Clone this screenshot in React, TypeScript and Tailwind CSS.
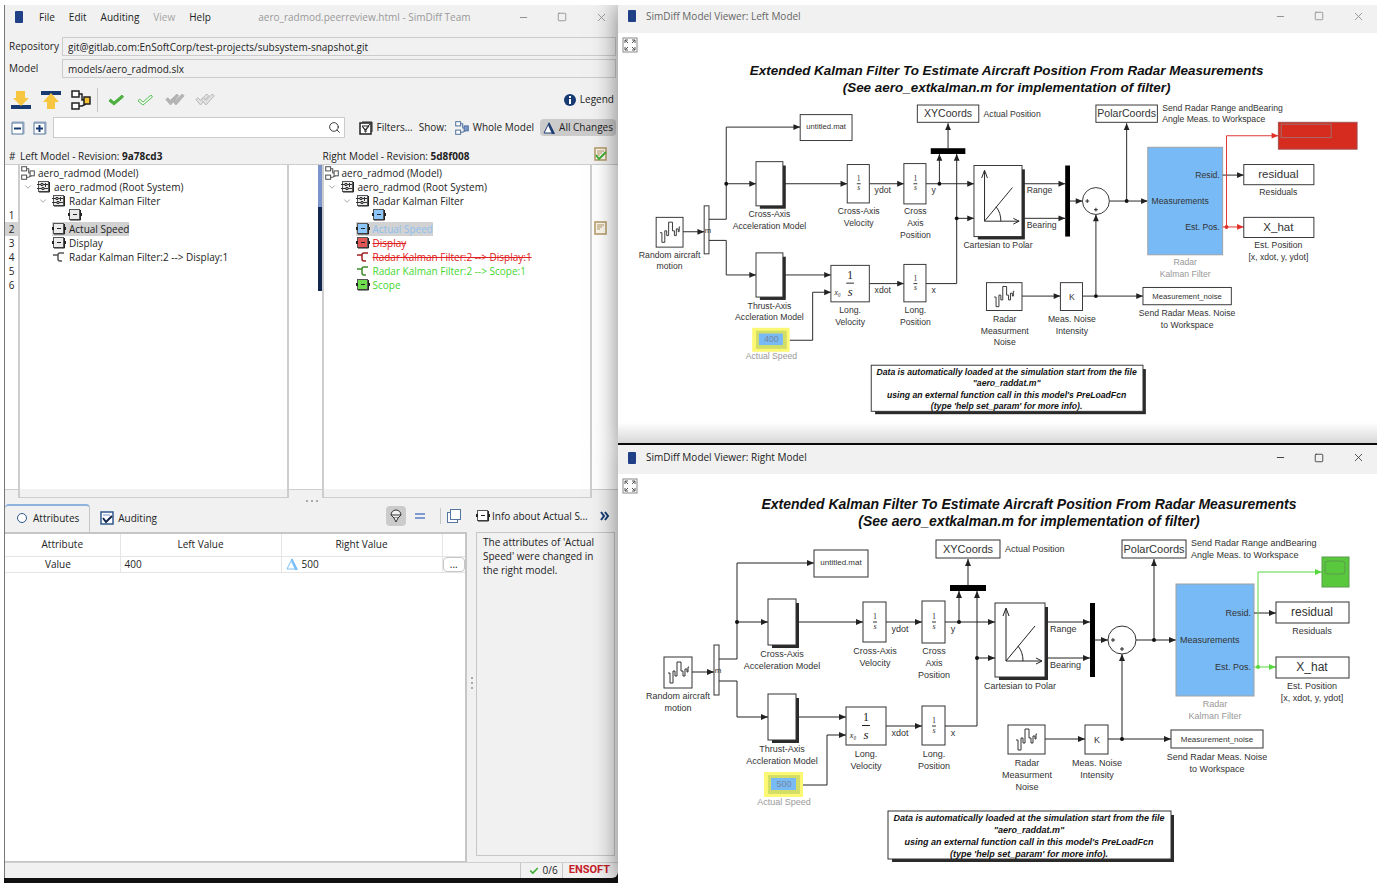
import React from 'react';
import { Check, ChevronDown, Minus, Search, Square, X } from 'lucide-react';
import clsx from 'clsx';

type Point = [number, number];
type Tone = 'plain' | 'changed' | 'removed' | 'added';

const toneFill: Record<Tone, string> = {
  plain: '#ebebeb',
  changed: '#8cc6fa',
  removed: '#e25555',
  added: '#6fdc4e',
};

const toneText: Record<Tone, string> = {
  plain: 'text-[#222]',
  changed: 'text-[#8cc0f0]',
  removed: 'text-[#e02020] line-through',
  added: 'text-[#44d62c]',
};

/* ---------- icons ---------- */

const AppIcon = () => <span className="block h-3 w-2 rounded-[1px] bg-[#1f3f86]" />;

const TreeIcon = ({ accent = '#fff', stroke = '#333', size = 14 }: { accent?: string; stroke?: string; size?: number }) => (
  <svg width={size} height={size} viewBox="0 0 20 20" fill="none" stroke={stroke} strokeWidth="1.5" aria-hidden="true">
    <path d="M8 4h3v6h3M8 16h3l4-2" />
    <rect x="1" y="1" width="7" height="6" fill="#fff" />
    <rect x="1" y="13" width="7" height="6" fill="#fff" />
    <rect x="13" y="7" width="6" height="7" fill={accent} />
  </svg>
);

const BlockIcon = ({ fill = '#ebebeb' }: { fill?: string }) => (
  <svg width="14" height="12" viewBox="0 0 14 12" aria-hidden="true">
    <rect x="1.5" y="0.5" width="10" height="10" fill={fill} stroke="#555" />
    <path d="M2 11h10.500V1" fill="none" stroke="#222" />
    <path d="M0 4h2v3H0zM12 4h2v3h-2z" fill="#222" />
    <path d="M5 5.500h4" stroke="#222" />
  </svg>
);

const SystemIcon = () => (
  <svg width="14" height="12" viewBox="0 0 14 12" aria-hidden="true">
    <rect x="1.5" y="0.5" width="10" height="10" fill="#ebebeb" stroke="#555" />
    <path d="M2 11h10.500V1" fill="none" stroke="#222" />
    <path d="M0 3.500h4M4 2.500h2v2H4zM6 3.500h5M8.500 2v4M0 7.500h5M5 6.500h2v2H5zM7 7.500h4" fill="none" stroke="#333" />
  </svg>
);

const LineIcon = ({ tone = 'plain' }: { tone?: Tone }) => {
  const color = { plain: '#555', changed: '#357', removed: '#a02020', added: '#3c8c2c' }[tone];
  return (
    <svg width="14" height="12" viewBox="0 0 14 12" fill="none" stroke={color} strokeWidth="1.5" aria-hidden="true">
      <path d="M1 4h5M12 2H8Q6 2 6 4v4q0 2 2 2h2" />
    </svg>
  );
};

const NoteIcon = ({ checked }: { checked?: boolean }) => (
  <svg width="13" height="15" viewBox="0 0 13 15" fill="none" aria-hidden="true">
    <rect x="1" y="1" width="11" height="12" fill="#fdf8ee" stroke="#b39866" strokeWidth="1.500" />
    <path d="M3 4h7M3 6h5M3 8h3" stroke="#b39866" />
    {checked && <path d="M2 8l3 4 7-7" stroke="#3fae35" strokeWidth="2" />}
  </svg>
);

const DoubleCheck = ({ outline }: { outline?: boolean }) => (
  <svg width="20" height="13" viewBox="0 0 22 14" fill={outline ? '#e4e4e4' : '#b4b4b4'} stroke="#b0b0b0" aria-hidden="true">
    <path d="M1 7l2-2 3 3 7-7 2 2-9 10z" />
    <path d="M7 7l2-2 3 3 7-7 2 2-9 10z" />
  </svg>
);

const SingleCheck = ({ outline }: { outline?: boolean }) => (
  <svg width="17" height="14" viewBox="0 0 17 14" fill={outline ? '#eefaee' : '#4caf3f'} stroke={outline ? '#5cc05c' : '#4caf3f'} aria-hidden="true">
    <path d="M1 8l1.500-2L6 9l8-7 1.500 2L6 12z" />
  </svg>
);

const DownloadIcon = () => (
  <svg width="20" height="20" viewBox="0 0 20 20" aria-hidden="true">
    <path d="M0 15h20v4H0z" fill="#173a73" />
    <path d="M5 1h9v7h4l-8 8-8-8h3z" fill="#f7c640" />
  </svg>
);

const UploadIcon = () => (
  <svg width="20" height="20" viewBox="0 0 20 20" aria-hidden="true">
    <path d="M0 1h20v4H0z" fill="#173a73" />
    <path d="M10 3l8 9h-4v7H6v-7H2z" fill="#f7c640" />
  </svg>
);

const ExpandBox = ({ plus }: { plus?: boolean }) => (
  <svg width="14" height="14" viewBox="0 0 14 14" fill="none" stroke="#54769f" aria-hidden="true">
    <path d="M1 1h12v12" stroke="#8fa5c2" />
    <rect x="1" y="2" width="11" height="11" fill="#fff" />
    <path d={plus ? 'M3 7.500h7M6.500 4v7' : 'M3 7.500h7'} stroke="#173a73" strokeWidth="2" />
  </svg>
);

const Triangle = ({ color = '#1f3f73' }: { color?: string }) => (
  <svg width="12" height="12" viewBox="0 0 12 12" aria-hidden="true">
    <path d="M6 1L1 11h10z" fill="#fff" stroke={color} />
    <path d="M6 0l6 12H9L5 3z" fill={color} />
  </svg>
);

const FilterIcon = () => (
  <svg width="14" height="14" viewBox="0 0 14 14" fill="none" stroke="#222" aria-hidden="true">
    <path d="M3 1h10v10" />
    <rect x="1" y="2" width="11" height="11" fill="#fff" strokeWidth="1.500" />
    <path d="M3 5h7L7 9v2H6V9zM4 6l2 3 5-6" />
  </svg>
);

const SearchIcon = () => <Search size={13} strokeWidth={1.75} className="text-[#333]" />;

/* ---------- shared window parts ---------- */

const WindowButtons = ({ muted }: { muted?: boolean }) => (
  <div className={clsx('flex items-center gap-7', muted ? 'text-[#8a8a8a]' : 'text-[#333]')}>
    <button aria-label="Minimize"><Minus size={11} strokeWidth={2} /></button>
    <button aria-label="Maximize"><Square size={10} strokeWidth={2} /></button>
    <button aria-label="Close"><X size={13} strokeWidth={1.5} /></button>
  </div>
);

/* ---------- model tree ---------- */

interface Node {
  label: string;
  depth: number;
  kind: 'model' | 'system' | 'block' | 'line';
  tone?: Tone;
  selected?: boolean;
}

const baseNodes: Node[] = [
  { label: 'aero_radmod (Model)', depth: 0, kind: 'model' },
  { label: 'aero_radmod (Root System)', depth: 1, kind: 'system' },
  { label: 'Radar Kalman Filter', depth: 2, kind: 'system' },
];

const leftNodes: Node[] = [
  ...baseNodes,
  { label: '', depth: 3, kind: 'block' },
  { label: 'Actual Speed', depth: 2, kind: 'block', selected: true },
  { label: 'Display', depth: 2, kind: 'block' },
  { label: 'Radar Kalman Filter:2 --> Display:1', depth: 2, kind: 'line' },
];

const rightNodes: Node[] = [
  ...baseNodes,
  { label: '', depth: 3, kind: 'block', tone: 'changed' },
  { label: 'Actual Speed', depth: 2, kind: 'block', tone: 'changed', selected: true },
  { label: 'Display', depth: 2, kind: 'block', tone: 'removed' },
  { label: 'Radar Kalman Filter:2 --> Display:1', depth: 2, kind: 'line', tone: 'removed' },
  { label: 'Radar Kalman Filter:2 --> Scope:1', depth: 2, kind: 'line', tone: 'added' },
  { label: 'Scope', depth: 2, kind: 'block', tone: 'added' },
];

const indent = ['pl-px', 'pl-[17px]', 'pl-8', 'pl-12'];

const TreeRow = ({ node }: { node: Node }) => {
  const tone = node.tone ?? 'plain';
  return (
    <li className={clsx('flex h-3.5 items-center', indent[node.depth])}>
      {node.kind === 'system' && <ChevronDown size={10} strokeWidth={2} className="-ml-3.5 mr-1 shrink-0 text-[#999]" />}
      <span className={clsx('flex h-3.5 items-center gap-[3px] whitespace-nowrap', node.selected && 'bg-[#d2d2d2]')}>
        {node.kind === 'model' && <TreeIcon size={14} stroke="#555" />}
        {node.kind === 'system' && <SystemIcon />}
        {node.kind === 'block' && <BlockIcon fill={toneFill[tone]} />}
        {node.kind === 'line' && <LineIcon tone={tone} />}
        <span className={toneText[tone]}>{node.label}</span>
      </span>
    </li>
  );
};

const ModelTree = ({ nodes }: { nodes: Node[] }) => (
  <div className="flex min-w-0 flex-1 flex-col overflow-hidden border-x-2 border-t border-b border-[#cdcdcd] bg-white">
    <ul className="flex-1 pt-px">
      {nodes.map((node, i) => <TreeRow key={i} node={node} />)}
    </ul>
    <div className="h-2 bg-[#f1f1f1]" />
  </div>
);

const CompareTrees = () => (
  <section className="flex min-h-0 flex-1 flex-col">
    <div className="flex h-4 items-center">
      <span className="w-[13px] pl-1">#</span>
      <span className="flex-1 pl-0.5">Left Model - Revision: <b>9a78cd3</b></span>
      <span className="w-[33px]" />
      <span className="flex-1">Right Model - Revision: <b>5d8f008</b></span>
      <span className="-mt-1 w-[26px] pl-0.5"><NoteIcon checked /></span>
    </div>
    <div className="flex min-h-0 flex-1">
      <ol className="mb-2 w-[13px] border-y border-[#cdcdcd] bg-white pt-[43px] text-center">
        {[1, 2, 3, 4, 5, 6].map((n) => (
          <li key={n} className={clsx('h-3.5 leading-3.5', n === 2 && 'bg-[#d2d2d2]')}>{n}</li>
        ))}
      </ol>
      <ModelTree nodes={leftNodes} />
      <div className="mb-2 flex w-[33px] flex-col items-end border-y border-[#cdcdcd] bg-white">
        <span className="h-[42px] w-1 bg-[#7b94cc]" />
        <span className="h-[84px] w-1 bg-[#12264f]" />
      </div>
      <ModelTree nodes={rightNodes} />
      <div className="mb-2 w-[26px] border-y border-[#cdcdcd] bg-white pt-14 pl-0.5">
        <NoteIcon />
      </div>
    </div>
  </section>
);

/* ---------- attribute panel ---------- */

const AttributesPanel = () => (
  <section className="flex min-w-0 flex-1 flex-col">
    <div className="flex h-7 items-stretch">
      <div role="tablist" className="flex flex-1">
        <button role="tab" aria-selected="true" className="flex items-center gap-1.5 rounded-t border-t-2 border-r border-t-[#8fb2dc] border-r-[#c6c6c6] pr-2.5 pb-0.5 pl-3">
          <span className="block size-2.5 rounded-full border border-[#31588d] bg-white" />
          Attributes
        </button>
        <button role="tab" aria-selected="false" className="flex items-center gap-1 px-2.5">
          <svg width="14" height="14" viewBox="0 0 14 14" fill="none" aria-hidden="true">
            <rect x="1" y="1" width="12" height="12" fill="#fff" stroke="#31588d" strokeWidth="1.500" />
            <path d="M3 4h7" stroke="#7b94cc" />
            <path d="M3 7l3 4 6-6" stroke="#12264f" strokeWidth="2" />
          </svg>
          Auditing
        </button>
      </div>
      <div className="flex items-center pr-1.5 pb-1">
        <button aria-label="Pin selection" className="flex size-5 items-center justify-center rounded-sm bg-[#cbcbcb]">
          <svg width="12" height="14" viewBox="0 0 12 14" fill="#f4f4f4" stroke="#333" aria-hidden="true">
            <path d="M1 6a5 5 0 0 1 10 0L8 9H4z" />
            <path d="M1 6h10M4 9l2 4 2-4" />
          </svg>
        </button>
        <button aria-label="Show equal" className="ml-2 text-[#7f9bd2]">
          <svg width="12" height="8" viewBox="0 0 12 8" fill="currentColor" aria-hidden="true"><path d="M1 1h10v2H1zM1 5h10v2H1z" /></svg>
        </button>
        <span className="ml-3.5 h-4 w-px bg-[#c6c6c6]" />
        <button aria-label="Detach panel" className="ml-1.5">
          <svg width="14" height="14" viewBox="0 0 14 14" fill="#fff" stroke="#54769f" aria-hidden="true">
            <rect x="0.500" y="3.500" width="10" height="10" /><rect x="3.500" y="0.500" width="10" height="10" />
          </svg>
        </button>
      </div>
    </div>
    <div className="flex-1 border-t-2 border-r-2 border-b border-[#c6c6c6] bg-white">
      <table className="w-full table-fixed border-collapse">
        <colgroup><col className="w-[25%]" /><col className="w-[35%]" /><col className="w-[35%]" /><col className="w-[5%]" /></colgroup>
        <thead>
          <tr className="h-[22px] border-b border-[#e5e5e5]">
            <th className="border-r border-[#e5e5e5] font-normal">Attribute</th>
            <th className="border-r border-[#e5e5e5] font-normal">Left Value</th>
            <th className="border-r border-[#e5e5e5] font-normal">Right Value</th>
            <th aria-label="Actions" />
          </tr>
        </thead>
        <tbody>
          <tr className="h-4 border-b border-[#e5e5e5]">
            <td className="border-r border-[#e5e5e5] pl-10">Value</td>
            <td className="border-r border-[#e5e5e5] pl-1">400</td>
            <td className="border-r border-[#e5e5e5] pl-1">
              <span className="flex items-center gap-1"><Triangle color="#7cc0f6" />500</span>
            </td>
            <td><button className="block h-[15px] w-full rounded-sm border border-[#c6c6c6] leading-none" aria-label="Details">...</button></td>
          </tr>
        </tbody>
      </table>
    </div>
  </section>
);

const InfoPanel = () => (
  <aside className="mb-1.5 flex w-[142px] shrink-0 flex-col">
    <div className="flex h-7 items-center gap-0.5 pb-1">
      <BlockIcon fill="#fff" />
      <span className="flex-1 whitespace-nowrap">Info about Actual S...</span>
      <button aria-label="More" className="pr-2">
        <svg width="10" height="10" viewBox="0 0 10 10" fill="none" stroke="#173a73" strokeWidth="2" aria-hidden="true"><path d="M1 1l3 4-3 4M5 1l3 4-3 4" /></svg>
      </button>
    </div>
    <p className="mr-[3px] flex-1 border border-[#c6c6c6] pt-0.5 pl-1.5 leading-3.5">
      The attributes of 'Actual<br />Speed' were changed in<br />the right model.
    </p>
  </aside>
);

/* ---------- main window ---------- */

const fieldClass = 'h-[19px] min-w-0 flex-1 border border-[#cbcbcb] bg-[#f1f1f1] px-[5px] outline-none';

const DiffWindow = () => (
  <main className="mb-[5px] flex min-w-0 flex-col overflow-hidden rounded-br-md border-l border-[#777] bg-[#f1f1f1]">
    <header className="flex h-8 items-center pr-2.5 pb-2 pl-2.5">
      <AppIcon />
      <nav className="flex gap-3.5 pl-4">
        <button>File</button>
        <button>Edit</button>
        <button>Auditing</button>
        <button className="text-[#a5a5a5]">View</button>
        <button>Help</button>
      </nav>
      <h1 className="flex-1 text-center text-[#999]">aero_radmod.peerreview.html - SimDiff Team</h1>
      <WindowButtons muted />
    </header>
    <div className="flex flex-col gap-[3px] pr-0.5 pl-1">
      <div className="flex items-center">
        <label htmlFor="repo" className="w-[53px]">Repository</label>
        <input id="repo" readOnly className={fieldClass} value="git@gitlab.com:EnSoftCorp/test-projects/subsystem-snapshot.git" />
      </div>
      <div className="flex items-center">
        <label htmlFor="model" className="w-[53px]">Model</label>
        <input id="model" readOnly className={fieldClass} value="models/aero_radmod.slx" />
      </div>
    </div>
    <div className="flex h-[39px] items-center gap-2.5 pt-1 pr-1 pl-1.5">
      <button aria-label="Next change"><DownloadIcon /></button>
      <button aria-label="Previous change"><UploadIcon /></button>
      <button aria-label="Show in model"><TreeIcon size={20} stroke="#222" accent="#f7c232" /></button>
      <span className="-ml-1 h-6 w-px bg-[#c6c6c6]" />
      <button aria-label="Approve"><SingleCheck /></button>
      <button aria-label="Approve outline" className="ml-0.5"><SingleCheck outline /></button>
      <button aria-label="Approve all" className="ml-px"><DoubleCheck /></button>
      <button aria-label="Approve all outline"><DoubleCheck outline /></button>
      <button className="ml-auto flex items-center gap-1">
        <svg width="12" height="12" viewBox="0 0 12 12" aria-hidden="true"><circle cx="6" cy="6" r="6" fill="#173a73" /><path d="M5 2h2v2H5zM5 5h2v5H5z" fill="#fff" /></svg>
        Legend
      </button>
    </div>
    <div className="flex h-[21px] items-center pr-0.5 pl-1.5">
      <button aria-label="Collapse all"><ExpandBox /></button>
      <button aria-label="Expand all" className="ml-2"><ExpandBox plus /></button>
      <div className="ml-1.5 flex h-[21px] min-w-0 flex-1 items-center border border-[#cbcbcb] bg-white px-[3px]">
        <input aria-label="Search" className="min-w-0 flex-1 outline-none" />
        <SearchIcon />
      </div>
      <button className="ml-3.5 flex items-center gap-1"><FilterIcon />Filters...</button>
      <span className="ml-1.5">Show:</span>
      <button className="ml-2 flex items-center gap-1 whitespace-nowrap"><TreeIcon size={14} stroke="#54769f" accent="#7b94cc" />Whole Model</button>
      <button className="ml-1.5 flex h-[17px] items-center gap-1 rounded-sm bg-[#cbcbcb] px-[3px] whitespace-nowrap"><Triangle />All Changes</button>
    </div>
    <div className="h-2.5" />
    <CompareTrees />
    <div className="flex h-1.5 items-center justify-center text-[#aaa]">
      <svg width="12" height="2" viewBox="0 0 12 2" fill="currentColor" aria-hidden="true"><path d="M0 0h2v2H0zM5 0h2v2H5zM10 0h2v2h-2z" /></svg>
    </div>
    <div className="flex h-[358px]">
      <AttributesPanel />
      <div className="flex w-[9px] items-center justify-center text-[#aaa]">
        <svg width="2" height="12" viewBox="0 0 2 12" fill="currentColor" aria-hidden="true"><path d="M0 0h2v2H0zM0 5h2v2H0zM0 10h2v2H0z" /></svg>
      </div>
      <InfoPanel />
    </div>
    <footer className="flex h-4 items-center justify-end border-t border-[#d0d0d0]">
      <span className="flex h-full items-center gap-1 border-x border-[#c6c6c6] pr-1 pl-2"><Check size={10} strokeWidth={4} className="text-[#3fae35]" />0/6</span>
      <span className="pr-2 pl-1.5 font-['Roboto',sans-serif] text-[11px] font-bold text-[#c4202a]">ENSOFT</span>
    </footer>
  </main>
);

/* ---------- block diagram ---------- */

// Orthogonal signal line that ends in a solid arrow head.
const Wire = ({ points, color = '#222' }: { points: Point[]; color?: string }) => {
  const [x, y] = points[points.length - 1];
  const [px, py] = points[points.length - 2];
  const dx = Math.sign(x - px);
  const dy = Math.sign(y - py);
  const bx = x - dx * 7;
  const by = y - dy * 7;
  return (
    <g>
      <polyline points={points.join(' ')} fill="none" stroke={color} />
      <polygon points={`${x},${y} ${bx + dy * 3},${by + dx * 3} ${bx - dy * 3},${by - dx * 3}`} fill={color} />
    </g>
  );
};

interface LabelProps {
  x: number;
  y: number;
  lines: string[];
  size?: number;
  anchor?: 'start' | 'middle' | 'end';
  fill?: string;
  gap?: number;
}

const Label = ({ x, y, lines, size = 9, anchor = 'middle', fill = '#333', gap = 12 }: LabelProps) => (
  <text textAnchor={anchor} fontSize={size} fill={fill}>
    {lines.map((line, i) => <tspan key={i} x={x} y={y + i * gap}>{line}</tspan>)}
  </text>
);

const Box = ({ x, y, w, h, shadow }: { x: number; y: number; w: number; h: number; shadow?: boolean }) => (
  <g>
    {shadow && <rect x={x + 4} y={y + 4} width={w - 1} height={h - 1} fill="#2a2a2a" />}
    <rect x={x} y={y} width={w} height={h} fill="#fff" stroke="#333" />
  </g>
);

const Integrator = ({ x, y }: { x: number; y: number }) => (
  <g fontFamily="'Liberation Serif', serif" fontSize="8" textAnchor="middle" fill="#333">
    <text x={x} y={y - 3}>1</text>
    <path d={`M${x - 2} ${y}h4`} stroke="#333" />
    <text x={x} y={y + 7} fontStyle="italic">s</text>
  </g>
);

const Noise = ({ x, y }: { x: number; y: number }) => (
  <path transform={`translate(${x} ${y})`} d="M0 11h2v10h3V9h2v5h2V0h4v9h2v5h2V7h2v3h1V5h1" fill="none" stroke="#333" />
);

const Dot = ({ x, y, color = '#111' }: { x: number; y: number; color?: string }) => <circle cx={x} cy={y} r="2" fill={color} />;

const Diagram = ({ side, viewBox }: { side: 'left' | 'right'; viewBox: string }) => {
  const isLeft = side === 'left';
  const mark = isLeft ? '#e0302a' : '#58d840';
  return (
    <svg viewBox={viewBox} className="block size-full" fontFamily="'Liberation Sans', Arial, sans-serif" role="img" aria-label={`${side} model diagram`}>
      <g fontWeight="bold" fontStyle="italic">
        <Label x={412} y={36} size={14} gap={17} fill="#111" lines={['Extended Kalman Filter To Estimate Aircraft Position From Radar Measurements', '(See aero_extkalman.m for implementation of filter)']} />
      </g>

      <Wire points={[[102, 186], [120, 186], [120, 90], [197, 90]]} />
      <Wire points={[[120, 149], [151, 149]]} />
      <Wire points={[[102, 208], [120, 208], [120, 244], [151, 244]]} />
      <Wire points={[[75, 199], [97, 199]]} />
      <Wire points={[[179, 149], [246, 149]]} />
      <Wire points={[[269, 149], [305, 149]]} />
      <Wire points={[[328, 149], [378, 149]]} />
      <Wire points={[[342, 149], [342, 118]]} />
      <Wire points={[[351, 112], [351, 86]]} />
      <Wire points={[[179, 244], [229, 244]]} />
      <Wire points={[[186, 312], [210, 312], [210, 262], [229, 262]]} />
      <Wire points={[[269, 253], [305, 253]]} />
      <Wire points={[[328, 253], [360, 253], [360, 118]]} />
      <Wire points={[[360, 185], [378, 185]]} />
      <Wire points={[[428, 149], [473, 149]]} />
      <Wire points={[[428, 185], [473, 185]]} />
      <Wire points={[[478, 167], [491, 167]]} />
      <Wire points={[[519, 167], [559, 167]]} />
      <Wire points={[[537, 167], [537, 86]]} />
      <Wire points={[[428, 266], [468, 266]]} />
      <Wire points={[[491, 266], [554, 266]]} />
      <Wire points={[[505, 266], [505, 181]]} />
      <Dot x={120} y={149} />
      <Dot x={342} y={149} />
      <Dot x={360} y={185} />
      <Dot x={537} y={167} />
      <Dot x={505} y={266} />

      <Box x={47} y={184} w={28} h={31} />
      <Noise x={51} y={189} />
      <Label x={61} y={226} lines={['Random aircraft', 'motion']} />
      <Box x={97} y={172} w={5} h={50} />
      <Label x={101} y={200} size={8} lines={['m']} />
      <Box x={197} y={77} w={54} h={27} />
      <Label x={224} y={92} size={8} lines={['untitled.mat']} />
      <Box x={151} y={126} w={28} h={46} shadow />
      <Label x={165} y={184} lines={['Cross-Axis', 'Acceleration Model']} />
      <Box x={151} y={221} w={28} h={46} shadow />
      <Label x={165} y={279} lines={['Thrust-Axis', 'Accleration Model']} />
      <Box x={246} y={129} w={23} h={40} />
      <Integrator x={258} y={149} />
      <Label x={258} y={181} lines={['Cross-Axis', 'Velocity']} />
      <Box x={305} y={128} w={23} h={42} />
      <Integrator x={317} y={149} />
      <Label x={317} y={181} lines={['Cross', 'Axis', 'Position']} />
      <Label x={283} y={159} lines={['ydot']} />
      <Label x={336} y={159} lines={['y']} />
      <Box x={229} y={234} w={40} h={38} />
      <g fontFamily="'Liberation Serif', serif" textAnchor="middle" fill="#222">
        <text x="249" y="248" fontSize="12">1</text>
        <path d="M245 252.500h8" stroke="#222" />
        <text x="249" y="266" fontSize="13" fontStyle="italic">s</text>
        <text x="236" y="265" fontSize="8" fontStyle="italic">x₀</text>
      </g>
      <Label x={249} y={284} lines={['Long.', 'Velocity']} />
      <Box x={305} y={233} w={23} h={39} />
      <Integrator x={317} y={253} />
      <Label x={317} y={284} lines={['Long.', 'Position']} />
      <Label x={283} y={263} lines={['xdot']} />
      <Label x={336} y={263} lines={['x']} />

      <rect x="147" y="299" width="39" height="25" fill="#fdf873" />
      <rect x="151" y="302" width="32" height="19" fill="#d2de66" />
      <rect x="154" y="305" width="25" height="12" fill="#78baf5" />
      <Label x={167} y={314} size={9} fill="#7688a0" lines={[isLeft ? '400' : '500']} />
      <Label x={167} y={332} fill="#999" lines={['Actual Speed']} />

      <Box x={319} y={67} w={64} h={18} />
      <Label x={351} y={80} size={11} lines={['XYCoords']} />
      <Label x={388} y={79} anchor="start" lines={['Actual Position']} />
      <rect x="333" y="112" width="36" height="6" fill="#000" />
      <Box x={378} y={130} w={50} h={74} shadow />
      <path d="M389 188V136M386 143l3-8 3 8M389 188h36M419 185l6 3-6 3M389 188l29-35M401 173q5 6 5 15" fill="none" stroke="#222" />
      <Label x={403} y={216} lines={['Cartesian to Polar']} />
      <Label x={433} y={159} anchor="start" lines={['Range']} />
      <Label x={433} y={195} anchor="start" lines={['Bearing']} />
      <rect x="473" y="130" width="5" height="74" fill="#000" />
      <circle cx="505" cy="167" r="14" fill="#fff" stroke="#333" />
      <path d="M494 167h4M496 165v4M503 176h4M505 174v4" stroke="#222" />
      <Box x={505} y={67} w={64} h={18} />
      <Label x={537} y={80} size={11} lines={['PolarCoords']} />
      <Label x={574} y={73} anchor="start" lines={['Send Radar Range andBearing', 'Angle Meas. to Workspace']} />

      <rect x="559" y="111" width="78" height="112" fill="#78baf5" stroke="#a0a0a0" />
      <Label x={563} y={170} anchor="start" lines={['Measurements']} />
      <Label x={634} y={143} anchor="end" lines={['Resid.']} />
      <Label x={634} y={197} anchor="end" lines={['Est. Pos.']} />
      <Label x={598} y={234} fill="#999" lines={['Radar', 'Kalman Filter']} />
      <Wire points={[[637, 140], [659, 140]]} />
      <Wire color={mark} points={[[637, 194], [659, 194]]} />
      <Wire color={mark} points={[[641, 194], [641, 99], [isLeft ? 695 : 705, 99]]} />
      <Dot x={641} y={194} color={mark} />
      {isLeft ? (
        <g stroke="#a05050">
          <rect x="695" y="85" width="82" height="28" fill="#d62c20" />
          <rect x="698" y="87" width="52" height="14" fill="none" stroke="#a0706c" />
        </g>
      ) : (
        <g stroke="#5a9a50">
          <rect x="705" y="84" width="27" height="30" fill="#5ac83c" />
          <rect x="708" y="88" width="20" height="13" rx="3" fill="none" />
        </g>
      )}
      <Box x={659} y={129} w={73} h={21} />
      <Label x={695} y={143} size={12} lines={['residual']} />
      <Label x={695} y={161} lines={['Residuals']} />
      <Box x={659} y={184} w={73} h={21} />
      <Label x={695} y={198} size={12} lines={['X_hat']} />
      <Label x={695} y={216} lines={['Est. Position', '[x, xdot, y, ydot]']} />

      <Box x={391} y={252} w={37} h={29} />
      <Noise x={399} y={256} />
      <Label x={410} y={293} lines={['Radar', 'Measurment', 'Noise']} />
      <Box x={468} y={252} w={23} h={29} />
      <Label x={480} y={270} lines={['K']} />
      <Label x={480} y={293} lines={['Meas. Noise', 'Intensity']} />
      <Box x={554} y={257} w={92} h={18} />
      <Label x={600} y={269} size={8} lines={['Measurement_noise']} />
      <Label x={600} y={287} lines={['Send Radar Meas. Noise', 'to Workspace']} />

      <Box x={271} y={338} w={283} h={48} shadow />
      <g fontWeight="bold" fontStyle="italic">
        <Label
          x={412}
          y={348}
          fill="#111"
          lines={[
            'Data is automatically loaded at the simulation start from the file',
            '"aero_raddat.m"',
            "using an external function call in this model's PreLoadFcn",
            "(type 'help set_param' for more info).",
          ]}
        />
      </g>
    </svg>
  );
};

const ViewerWindow = ({ side, viewBox }: { side: 'left' | 'right'; viewBox: string }) => (
  <section className="flex min-h-0 flex-1 flex-col bg-white shadow-[0_0_24px_rgba(0,0,0,0.5)]">
    <header className={clsx('flex items-center bg-[#f1f1f1] pr-3 pl-2.5', side === 'left' ? 'h-7 pb-1.5 text-[#666]' : 'h-[29px] pb-1')}>
      <AppIcon />
      <h2 className="flex-1 pl-2.5">SimDiff Model Viewer: {side === 'left' ? 'Left' : 'Right'} Model</h2>
      <WindowButtons muted={side === 'left'} />
    </header>
    <div className={clsx('relative min-h-0 flex-1', side === 'left' && 'bg-linear-to-b from-white from-95% to-[#d8d8d8]')}>
      <Diagram side={side} viewBox={viewBox} />
      <button aria-label="Fit to window" className="absolute top-1 left-1">
        <svg width="16" height="16" viewBox="0 0 16 16" fill="none" stroke="#555" aria-hidden="true">
          <rect x="1" y="1" width="14" height="14" stroke="#888" />
          <path d="M3 6V3h3M10 3h3v3M13 10v3h-3M6 13H3v-3M3 3l3 3M13 3l-3 3M13 13l-3-3M3 13l3-3" />
        </svg>
      </button>
    </div>
  </section>
);

const App: React.FC = () => {
  return (
    <div className="h-screen bg-white pt-[5px] pr-[3px] pb-[5px] pl-1 font-['Open_Sans','Noto_Sans',sans-serif] text-[10px] text-[#222]">
      <div className="grid h-full grid-cols-[614fr_759fr] overflow-hidden bg-[#111]">
        <DiffWindow />
        <div className="relative flex min-h-0 min-w-0 flex-col gap-0.5">
          <ViewerWindow side="left" viewBox="8 -8 789 427" />
          <ViewerWindow side="right" viewBox="1 2 759 407" />
        </div>
      </div>
    </div>
  );
};

export default App;
